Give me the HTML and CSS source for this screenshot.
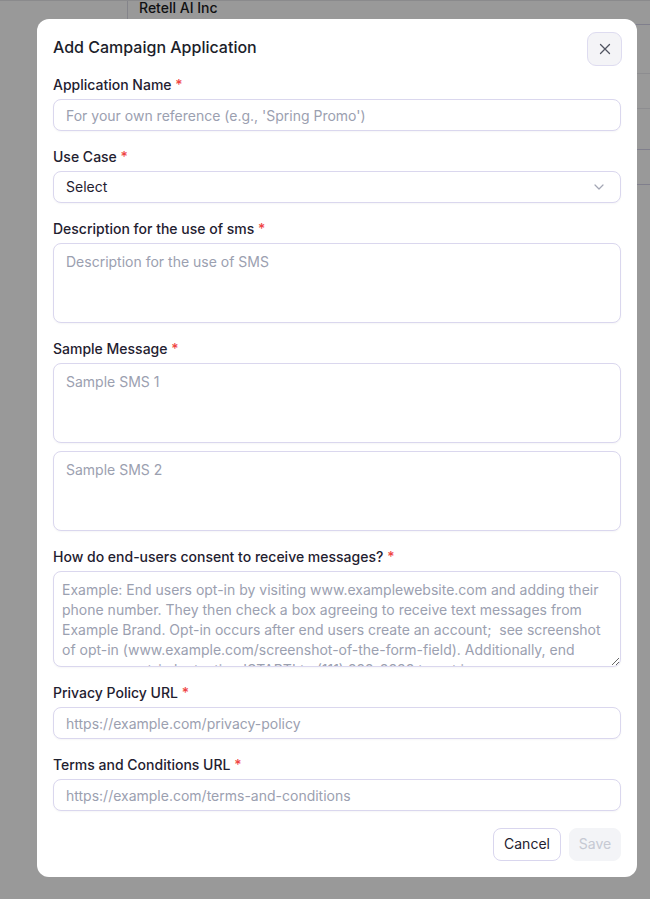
FILE: index.html
```html
<!DOCTYPE html>
<html lang="en">
<head>
<meta charset="utf-8">
<title>Add Campaign Application</title>
<link rel="stylesheet" href="styles.css">
</head>
<body>
<div class="page">
  <aside class="sidebar"></aside>
  <main class="main">
    <div class="row row-head"><span class="org">Retell AI Inc</span></div>
    <div class="row row-light"></div>
    <div class="row row-light short"></div>
    <div class="row row-dark"></div>
    <div class="row row-dark"></div>
  </main>
</div>

<div class="overlay">
  <div class="modal">
    <div class="modal-header">
      <h2 class="modal-title">Add Campaign Application</h2>
      <button class="close-btn" type="button" aria-label="Close">
        <svg width="12" height="12" viewBox="0 0 12 12" fill="none" stroke="#505461" stroke-width="1.3" stroke-linecap="round"><path d="M1.5 1.5l9 9M10.5 1.5l-9 9"/></svg>
      </button>
    </div>

    <form class="form">
      <div class="field">
        <label class="label">Application Name <span class="req">*</span></label>
        <input class="input" type="text" placeholder="For your own reference (e.g., 'Spring Promo')">
      </div>

      <div class="field">
        <label class="label">Use Case <span class="req">*</span></label>
        <div class="select">
          <span>Select</span>
          <svg width="10" height="6" viewBox="0 0 10 6" fill="none" stroke="#a3a6b4" stroke-width="1.2" stroke-linecap="round" stroke-linejoin="round"><path d="M1 1l4 4 4-4"/></svg>
        </div>
      </div>

      <div class="field">
        <label class="label">Description for the use of sms <span class="req">*</span></label>
        <textarea class="textarea" placeholder="Description for the use of SMS"></textarea>
      </div>

      <div class="field">
        <label class="label">Sample Message <span class="req">*</span></label>
        <div class="stack">
          <textarea class="textarea" placeholder="Sample SMS 1"></textarea>
          <textarea class="textarea" placeholder="Sample SMS 2"></textarea>
        </div>
      </div>

      <div class="field">
        <label class="label">How do end-users consent to receive messages? <span class="req">*</span></label>
        <textarea class="textarea consent" placeholder="Example: End users opt-in by visiting www.examplewebsite.com and adding their&#10;phone number. They then check a box agreeing to receive text messages from&#10;Example Brand. Opt-in occurs after end users create an account;  see screenshot&#10;of opt-in (www.example.com/screenshot-of-the-form-field). Additionally, end&#10;users can opt-in by texting 'START' to (111) 222-3333 to opt in."></textarea>
      </div>

      <div class="field">
        <label class="label">Privacy Policy URL <span class="req">*</span></label>
        <input class="input" type="text" placeholder="https://example.com/privacy-policy">
      </div>

      <div class="field">
        <label class="label">Terms and Conditions URL <span class="req">*</span></label>
        <input class="input" type="text" placeholder="https://example.com/terms-and-conditions">
      </div>

      <div class="actions">
        <button class="btn btn-cancel" type="button">Cancel</button>
        <button class="btn btn-save" type="button" disabled>Save</button>
      </div>
    </form>
  </div>
</div>
</body>
</html>
```

FILE: styles.css
```css
* { box-sizing: border-box; }

html, body {
  margin: 0;
  padding: 0;
  height: 100%;
}

body {
  font-family: Inter, "Noto Sans", "Liberation Sans", sans-serif;
  background: #ffffff;
  color: #1f2130;
  overflow: hidden;
}

/* background page */
.page {
  display: flex;
  height: 220px;
  border-top: 1px solid #e6e6ea;
}

.sidebar {
  width: 128px;
  border-right: 1px solid #dcdce6;
  flex-shrink: 0;
}

.main {
  flex: 1;
  display: flex;
  flex-direction: column;
}

.row {
  border-bottom: 1px solid #ececf0;
}

.row-head {
  height: 24px;
  padding-left: 11px;
  border-bottom-color: #d6d4ea;
}

.org {
  display: block;
  font-size: 14px;
  font-weight: 500;
  line-height: 14px;
  color: #1c1c22;
}

.row-light { height: 49px; }
.row-light.short { height: 35px; }
.row-dark { height: 41px; border-bottom-color: #d6d4ea; }
.row-dark:last-child { height: 35px; }

/* overlay & modal */
.overlay {
  position: fixed;
  inset: 0;
  background: rgba(0, 0, 0, 0.4);
  padding: 19px 0 0 37px;
}

.modal {
  width: 600px;
  background: #ffffff;
  border-radius: 12px;
  padding: 13px 16px 16px;
}

.modal-header {
  display: flex;
  align-items: center;
  justify-content: space-between;
  height: 34px;
  margin-bottom: 9px;
}

.modal-title {
  margin: 0;
  font-size: 16px;
  font-weight: 500;
  color: #1c1e2b;
  line-height: 20px;
  position: relative;
  top: -2px;
}

.close-btn {
  width: 35px;
  height: 34px;
  margin-right: -1px;
  border: 1px solid #dedcf0;
  background: #f4f4f7;
  border-radius: 9px;
  display: flex;
  align-items: center;
  justify-content: center;
  padding: 0;
}

.form {
  display: flex;
  flex-direction: column;
  gap: 16px;
}

.field {
  display: flex;
  flex-direction: column;
  gap: 4px;
}

.label {
  font-size: 14px;
  font-weight: 500;
  line-height: 20px;
  color: #1f2130;
}

.req { color: #ef4444; }

.input,
.select,
.textarea {
  width: 100%;
  border: 1px solid #dad7ee;
  border-radius: 8px;
  background: #ffffff;
  font-family: inherit;
  font-size: 14px;
  color: #1f2130;
  box-shadow: 0 1px 2px rgba(20, 20, 60, 0.04);
  outline: none;
}

.input {
  height: 32px;
  padding: 0 12px;
}

.input::placeholder,
.textarea::placeholder {
  color: #9ba0b0;
  opacity: 1;
}

.select {
  height: 32px;
  padding: 0 16px 0 12px;
  display: flex;
  align-items: center;
  justify-content: space-between;
}

.select span {
  margin-top: -1px;
}

.textarea {
  height: 80px;
  padding: 8px 12px;
  line-height: 20px;
  resize: none;
  display: block;
}

.stack {
  display: flex;
  flex-direction: column;
  gap: 8px;
}

.textarea.consent {
  height: 96px;
  padding: 8px 8px 0 8px;
  resize: vertical;
  overflow: hidden;
}

.actions {
  display: flex;
  justify-content: flex-end;
  gap: 8px;
  margin-top: 1px;
}

.btn {
  height: 33px;
  border-radius: 8px;
  font-family: inherit;
  font-size: 14px;
  line-height: 20px;
  padding: 0 0 1px;
  text-align: center;
}

.btn-cancel {
  width: 68px;
  border: 1px solid #d9d6ee;
  background: #ffffff;
  color: #1f2130;
}

.btn-save {
  width: 52px;
  border: 1px solid #f3f4f7;
  background: #f3f4f7;
  color: #c6c9d3;
}
```
